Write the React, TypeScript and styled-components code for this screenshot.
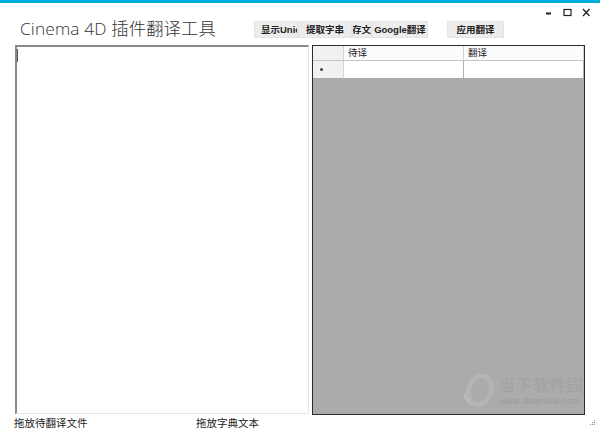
import React from 'react';
import styled, { createGlobalStyle } from 'styled-components';

const GlobalStyle = createGlobalStyle`
  html, body {
    margin: 0;
    padding: 0;
    background: #fff;
  }
`;

const Window = styled.div`
  position: relative;
  width: 600px;
  height: 430px;
  overflow: hidden;
  background: #fff;
  border-top: 3px solid #00acd9;
  box-sizing: border-box;
  font-family: "Liberation Sans", "Noto Sans CJK SC", sans-serif;
  color: #222;
`;

const WindowControls = styled.div`
  display: flex;
  justify-content: flex-end;
  align-items: center;
  gap: 10px;
  height: 14px;
  padding: 2px 9px 0 0;
`;

const ControlButton = styled.button`
  width: 9px;
  height: 9px;
  padding: 0;
  border: 0;
  background: none;
  display: flex;
  align-items: center;
  justify-content: center;
`;

const Toolbar = styled.div`
  display: flex;
  align-items: flex-start;
  height: 26px;
  padding-left: 20px;
`;

const Title = styled.div`
  width: 234px;
  margin-top: -2px;
  font-family: "Open Sans", "Noto Sans CJK SC", sans-serif;
  font-size: 17.3px;
  line-height: 24px;
  font-weight: 300;
  letter-spacing: 0.15px;
  white-space: nowrap;
  color: #333;
`;

const ToolButton = styled.button<{ $width: number; $gap?: number; $align?: string }>`
  width: ${p => p.$width}px;
  height: 17px;
  margin: 2px 0 0 ${p => p.$gap || 0}px;
  padding: 0;
  border: 1px solid #e4e4e4;
  background: #ececec;
  font-family: "Liberation Sans", "Noto Sans CJK SC", sans-serif;
  font-size: 9.5px;
  font-weight: 700;
  line-height: 15px;
  color: #222;
  white-space: nowrap;
  overflow: hidden;
  display: flex;
  justify-content: ${p => p.$align || 'center'};
`;

const ClippedLabel = styled.span`
  padding-left: 6px;
`;

const Panels = styled.div`
  display: flex;
  align-items: flex-start;
  padding-left: 15px;
`;

const SourceBox = styled.div`
  width: 294px;
  height: 369px;
  box-sizing: border-box;
  border-top: 2px solid #8a8a8a;
  border-left: 2px solid #8a8a8a;
  border-right: 1px solid #e6e6e6;
  border-bottom: 1px solid #e6e6e6;
  background: #fff;
  padding: 2px 0 0 0;
`;

const Caret = styled.div`
  width: 1px;
  height: 13px;
  background: #555;
`;

const GridView = styled.div`
  position: relative;
  width: 273px;
  height: 370px;
  margin-left: 3px;
  box-sizing: border-box;
  border: 1px solid #2c2c2c;
  background: #ababab;
  overflow: hidden;
`;

const GridRow = styled.div<{ $height: number }>`
  display: grid;
  grid-template-columns: 31px 120px 120px;
  height: ${p => p.$height}px;
  box-sizing: border-box;
`;

const HeaderCell = styled.div<{ $corner?: boolean }>`
  background: ${p => (p.$corner ? '#f1f1f1' : '#fbfbfb')};
  border-right: 1px solid #d4d4d4;
  border-bottom: 1px solid #c4c4c4;
  box-sizing: border-box;
  padding-left: 4px;
  font-size: 9.5px;
  line-height: 13px;
  color: #222;
`;

const RowHeader = styled.div`
  background: #f1f1f1;
  border-right: 1px solid #d4d4d4;
  border-bottom: 1px solid #a8a8a8;
  box-sizing: border-box;
  display: flex;
  align-items: center;
  padding-left: 7px;
`;

const Dot = styled.span`
  width: 3px;
  height: 3px;
  border-radius: 50%;
  background: #444;
`;

const Cell = styled.div`
  background: #fff;
  border-right: 1px solid #b0b0b0;
  border-bottom: 1px solid #a8a8a8;
  box-sizing: border-box;
`;

const Watermark = styled.div`
  position: absolute;
  left: 148px;
  top: 328px;
  display: flex;
  align-items: center;
  gap: 4px;
  opacity: 0.55;
`;

const WatermarkText = styled.div`
  display: flex;
  flex-direction: column;
`;

const WatermarkName = styled.div`
  font-size: 16px;
  line-height: 19px;
  letter-spacing: 1px;
  color: #9a9a9a;
  white-space: nowrap;
`;

const WatermarkUrl = styled.div`
  font-size: 9.5px;
  line-height: 11px;
  letter-spacing: 0.2px;
  color: #8f8f8f;
  white-space: nowrap;
`;

const Footer = styled.div`
  display: flex;
  padding: 1px 0 0 14px;
  font-size: 10.5px;
  line-height: 14px;
  color: #222;
`;

const FooterLabel = styled.div<{ $width: number }>`
  width: ${p => p.$width}px;
`;

const ResizeGrip = styled.div`
  position: absolute;
  right: 4px;
  bottom: 4px;
  display: grid;
  grid-template-columns: repeat(3, 2px);
  grid-auto-rows: 2px;
  gap: 0;
`;

const GripDot = styled.span<{ $on: boolean }>`
  width: 1px;
  height: 1px;
  background: ${p => (p.$on ? '#8a8a8a' : 'transparent')};
`;

const App: React.FC = () => {
  return (
    <Window>
      <GlobalStyle />
      <WindowControls>
        <ControlButton>
          <svg width="9" height="9" viewBox="0 0 9 9"><rect x="2" y="4.5" width="5" height="2" fill="#222" /></svg>
        </ControlButton>
        <ControlButton>
          <svg width="9" height="9" viewBox="0 0 9 9"><rect x="1" y="1.5" width="7" height="6" fill="none" stroke="#222" strokeWidth="1.2" /></svg>
        </ControlButton>
        <ControlButton>
          <svg width="9" height="9" viewBox="0 0 9 9"><path d="M1 1 L7.5 8 M7.5 1 L1 8" stroke="#222" strokeWidth="1.3" /></svg>
        </ControlButton>
      </WindowControls>

      <Toolbar>
        <Title>Cinema 4D 插件翻译工具</Title>
        <ToolButton $width={44} $align="flex-start"><ClippedLabel>显示Unicode</ClippedLabel></ToolButton>
        <ToolButton $width={54}>提取字串</ToolButton>
        <ToolButton $width={20} $align="flex-end">保存文</ToolButton>
        <ToolButton $width={56}>Google翻译</ToolButton>
        <ToolButton $width={57} $gap={19}>应用翻译</ToolButton>
      </Toolbar>

      <Panels>
        <SourceBox>
          <Caret />
        </SourceBox>
        <GridView>
          <GridRow $height={15}>
            <HeaderCell $corner />
            <HeaderCell>待译</HeaderCell>
            <HeaderCell>翻译</HeaderCell>
          </GridRow>
          <GridRow $height={18}>
            <RowHeader><Dot /></RowHeader>
            <Cell />
            <Cell />
          </GridRow>
          <Watermark>
            <svg width="34" height="34" viewBox="0 0 34 34">
              <ellipse cx="19" cy="16" rx="11" ry="15" fill="none" stroke="#bcbcbc" strokeWidth="5" transform="rotate(18 19 16)" />
              <path d="M2 22 Q5 30 14 32 Q7 27 5 19 Z" fill="#c8c8c8" />
            </svg>
            <WatermarkText>
              <WatermarkName>当下软件园</WatermarkName>
              <WatermarkUrl>www.downxia.com</WatermarkUrl>
            </WatermarkText>
          </Watermark>
        </GridView>
      </Panels>

      <Footer>
        <FooterLabel $width={182}>拖放待翻译文件</FooterLabel>
        <FooterLabel $width={100}>拖放字典文本</FooterLabel>
      </Footer>

      <ResizeGrip>
        {[0, 0, 1, 0, 1, 1, 1, 1, 1].map((on, i) => (
          <GripDot key={i} $on={on === 1} />
        ))}
      </ResizeGrip>
    </Window>
  );
};

export default App;
